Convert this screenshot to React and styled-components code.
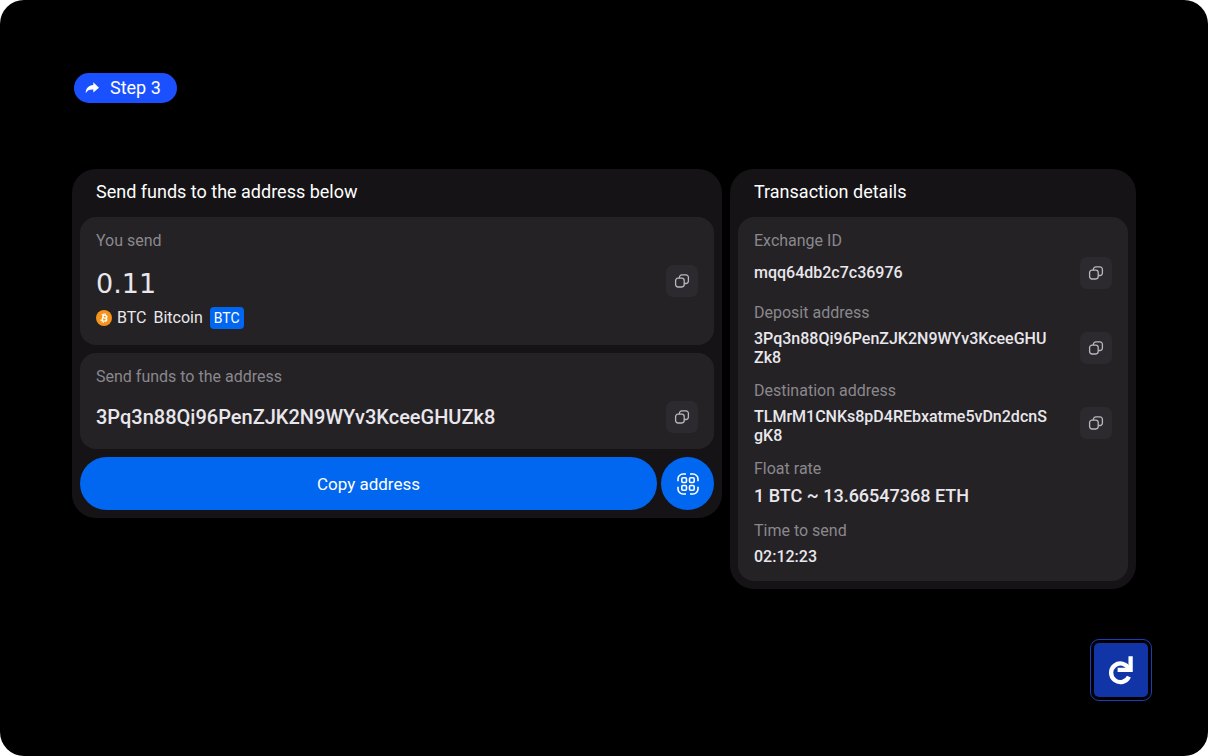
import React from "react";
import styled, { createGlobalStyle } from "styled-components";

const GlobalStyle = createGlobalStyle`
  *, *::before, *::after { box-sizing: border-box; }
  body {
    margin: 0;
    background: #fff;
    font-family: Roboto, "Liberation Sans", sans-serif;
    font-size: 16px;
    line-height: 20px;
    color: #e9e7ec;
  }
  h2, p, dl, dd { margin: 0; }
  button { font: inherit; color: inherit; border: 0; padding: 0; cursor: pointer; }
`;

const Page = styled.div`
  min-height: 100vh;
  display: flex;
  flex-direction: column;
  padding: 73px 56px 55px;
  border-radius: 24px;
  background: #000;
`;

const Content = styled.main`
  display: flex;
  flex-direction: column;
  gap: 66px;
  padding: 0 16px;
`;

const StepPill = styled.p`
  align-self: flex-start;
  display: flex;
  align-items: center;
  gap: 10px;
  height: 30px;
  margin-left: 2px;
  padding: 0 16px 0 10px;
  border-radius: 15px;
  background: #1b50ff;
  color: #fff;
  font-size: 18px;
`;

const Columns = styled.div`
  display: grid;
  grid-template-columns: 650fr 406fr;
  align-items: start;
  gap: 8px;
`;

const Card = styled.section`
  padding: 0 8px 8px;
  border-radius: 24px;
  background: #151316;
`;

const CardTitle = styled.h2`
  padding: 0 16px 2px;
  font-size: 18px;
  font-weight: 400;
  line-height: 46px;
  color: #fff;
`;

const Panels = styled.div`
  display: flex;
  flex-direction: column;
  gap: 8px;
`;

const Panel = styled.div`
  padding: 13px 16px 16px;
  border-radius: 16px;
  background: #242225;
`;

const DetailsPanel = styled(Panel)`
  display: flex;
  gap: 32px;
  padding-bottom: 15px;
`;

const Label = styled.p`
  line-height: 22px;
  color: #8a888d;
`;

const PanelRow = styled.div`
  display: flex;
  justify-content: space-between;
  align-items: flex-start;
  margin-top: 13px;
`;

const Amount = styled.p`
  font-family: "DejaVu Sans", sans-serif;
  font-size: 27px;
  line-height: 38px;
`;

const Coin = styled.div`
  display: flex;
  align-items: center;
  gap: 7px;
  height: 22px;
  margin-top: 4px;
`;

const Ticker = styled.span`
  display: flex;
  align-items: center;
  gap: 5px;
`;

const Network = styled.span`
  padding: 0 4px;
  border-radius: 4px;
  background: #0166f0;
  color: #fff;
  font-size: 14px;
  line-height: 22px;
`;

const Address = styled.p`
  font-size: 20px;
  font-weight: 500;
  line-height: 32px;
  overflow-wrap: anywhere;
`;

const CopyButton = styled.button`
  flex: none;
  display: grid;
  place-items: center;
  width: 32px;
  height: 32px;
  border-radius: 7px;
  background: #2c2a2e;
`;

const Actions = styled.div`
  display: flex;
  gap: 4px;
`;

const PrimaryButton = styled.button`
  flex: 1;
  height: 53px;
  border-radius: 27px;
  background: #0166f0;
  color: #fff;
  font-size: 17px;
`;

const QrButton = styled.button`
  flex: none;
  display: grid;
  place-items: center;
  width: 53px;
  height: 53px;
  border-radius: 50%;
  background: #0166f0;
`;

const Details = styled.dl`
  flex: 1;
  min-width: 0;
  display: flex;
  flex-direction: column;
  gap: 13px;
`;

const Value = styled.dd`
  margin-top: 5px;
  font-size: ${(p) => (p.$large ? 18 : 16)}px;
  font-weight: 500;
  line-height: ${(p) => p.$line || 19}px;
  word-break: break-all;
`;

const CopyColumn = styled.div`
  flex: none;
  display: flex;
  flex-direction: column;
  gap: 43px;
  padding-top: 27px;
`;

const LogoLink = styled.a`
  align-self: flex-end;
  margin-top: auto;
  padding: 3px;
  border: 1px solid #1a3fb8;
  border-radius: 9px;
`;

const LogoTile = styled.svg`
  display: block;
  border-radius: 5px;
  background: #1135a6;
`;

const CopyIcon = () => (
  <svg width="16" height="16" viewBox="0 0 16 16" fill="none" stroke="#b9b7bc" strokeWidth="1.3" aria-hidden="true">
    <rect x="1.6" y="5.2" width="8.6" height="8.8" rx="2.4" />
    <path d="M5.4 5.2v-.9a2.4 2.4 0 0 1 2.4-2.4h4.2a2.4 2.4 0 0 1 2.4 2.4v3.8a2.4 2.4 0 0 1-2.4 2.4h-1.8" />
  </svg>
);

const ShareIcon = () => (
  <svg width="16" height="16" viewBox="0 0 16 16" fill="#fff" aria-hidden="true">
    <path d="M9.3 2.3 15 7.7 9.3 12.5V9.6C5.7 9.4 3.3 10.4 1.8 13.2 1.5 8.4 4.7 5.3 9.3 5Z" />
  </svg>
);

const BitcoinIcon = () => (
  <svg width="16" height="16" viewBox="0 0 32 32" aria-hidden="true">
    <circle cx="16" cy="16" r="16" fill="#f7931a" />
    <path
      fill="#fff"
      d="M23.19 14.02c.31-2.1-1.29-3.23-3.47-3.98l.71-2.84-1.73-.43-.69 2.76c-.45-.11-.92-.22-1.38-.32l.69-2.78-1.72-.43-.71 2.84c-.38-.09-.75-.17-1.1-.26l-2.39-.6-.46 1.85s1.29.3 1.26.31c.7.18.83.64.81 1.01l-.81 3.24-1.14 4.54c-.09.21-.3.53-.8.41.02.03-1.26-.31-1.26-.31l-.86 1.98 2.25.56c.42.1.83.21 1.23.32l-.71 2.87 1.72.43.71-2.84c.47.13.93.25 1.38.36l-.71 2.83 1.73.43.71-2.87c2.95.56 5.17.33 6.1-2.33.75-2.15-.04-3.39-1.59-4.2 1.13-.26 1.98-1 2.21-2.53zm-3.95 5.54c-.53 2.15-4.15.99-5.32.7l.95-3.81c1.17.29 4.94.87 4.37 3.11zm.54-5.57c-.49 1.95-3.5.96-4.48.72l.86-3.46c.98.25 4.13.7 3.62 2.74z"
    />
  </svg>
);

const QrIcon = () => (
  <svg width="24" height="24" viewBox="0 0 24 24" fill="none" stroke="#fff" strokeWidth="1.6" aria-hidden="true">
    <path d="M2 9.2V7a5 5 0 0 1 5-5h3M14 2h3a5 5 0 0 1 5 5v2.2M22 14.8V17a5 5 0 0 1-5 5h-3M10 22H7a5 5 0 0 1-5-5v-2.2" />
    <rect x="5.8" y="5.8" width="4.7" height="4.7" rx="1.2" />
    <rect x="13.5" y="5.8" width="4.7" height="4.7" rx="1.2" />
    <rect x="5.8" y="13.5" width="4.7" height="4.7" rx="1.2" />
    <rect x="13.5" y="13.5" width="4.7" height="4.7" rx="1.2" />
  </svg>
);

const Logo = () => (
  <LogoTile width="54" height="54" viewBox="0 0 54 54" aria-hidden="true">
    <g fill="none" stroke="#fff" strokeWidth="4.3">
      <path d="M34.9 33.6A9.3 9.3 0 1 1 34.9 26" />
      <path d="M23.6 26.8H36.6V13.2" />
    </g>
  </LogoTile>
);

const Copy = ({ what }) => (
  <CopyButton type="button" aria-label={`Copy ${what}`}>
    <CopyIcon />
  </CopyButton>
);

const details = [
  { label: "Exchange ID", value: "mqq64db2c7c36976", line: 32 },
  { label: "Deposit address", value: "3Pq3n88Qi96PenZJK2N9WYv3KceeGHUZk8" },
  { label: "Destination address", value: "TLMrM1CNKs8pD4REbxatme5vDn2dcnSgK8" },
  { label: "Float rate", value: "1 BTC ~ 13.66547368 ETH", line: 22, large: true },
  { label: "Time to send", value: "02:12:23" },
];

export default function App() {
  return (
    <Page>
      <GlobalStyle />
      <Content>
        <StepPill>
          <ShareIcon />
          Step 3
        </StepPill>
        <Columns>
          <Card>
            <CardTitle>Send funds to the address below</CardTitle>
            <Panels>
              <Panel>
                <Label>You send</Label>
                <PanelRow>
                  <div>
                    <Amount>0.11</Amount>
                    <Coin>
                      <Ticker>
                        <BitcoinIcon />
                        BTC
                      </Ticker>
                      <span>Bitcoin</span>
                      <Network>BTC</Network>
                    </Coin>
                  </div>
                  <Copy what="amount" />
                </PanelRow>
              </Panel>
              <Panel>
                <Label>Send funds to the address</Label>
                <PanelRow>
                  <Address>3Pq3n88Qi96PenZJK2N9WYv3KceeGHUZk8</Address>
                  <Copy what="address" />
                </PanelRow>
              </Panel>
              <Actions>
                <PrimaryButton type="button">Copy address</PrimaryButton>
                <QrButton type="button" aria-label="Show QR code">
                  <QrIcon />
                </QrButton>
              </Actions>
            </Panels>
          </Card>
          <Card>
            <CardTitle>Transaction details</CardTitle>
            <DetailsPanel>
              <Details>
                {details.map((d) => (
                  <div key={d.label}>
                    <Label as="dt">{d.label}</Label>
                    <Value $large={d.large} $line={d.line}>
                      {d.value}
                    </Value>
                  </div>
                ))}
              </Details>
              <CopyColumn>
                <Copy what="exchange ID" />
                <Copy what="deposit address" />
                <Copy what="destination address" />
              </CopyColumn>
            </DetailsPanel>
          </Card>
        </Columns>
      </Content>
      <LogoLink href="#" aria-label="Home">
        <Logo />
      </LogoLink>
    </Page>
  );
}
